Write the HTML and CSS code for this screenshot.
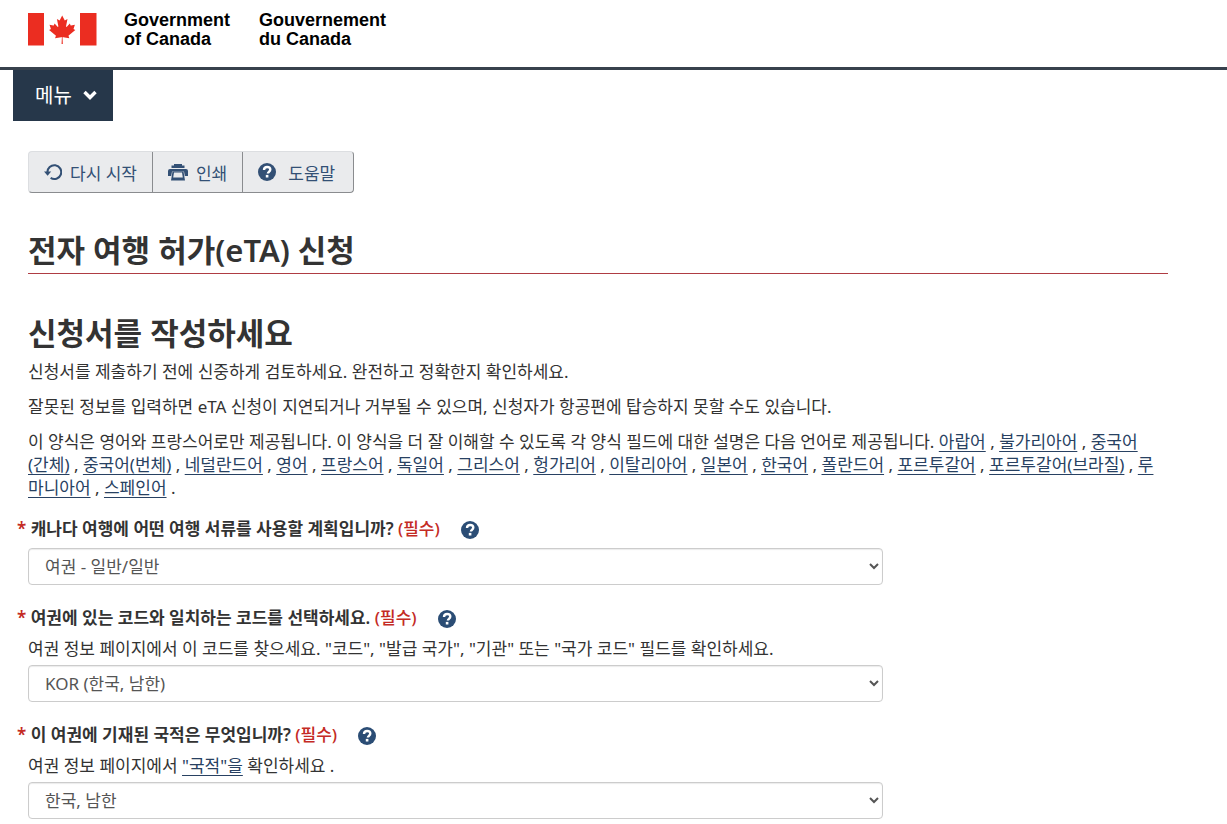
FILE: index.html
```html
<!DOCTYPE html>
<html lang="ko">
<head>
    <meta charset="UTF-8">
    <meta name="viewport" content="width=device-width, initial-scale=1.0">
    <title>전자 여행 허가(eTA) 신청</title>
    <link rel="stylesheet" href="styles.css">
</head>
<body>
    <svg class="sprite" width="0" height="0" aria-hidden="true">
        <symbol id="icon-help" viewBox="0 0 18 18">
            <circle cx="9" cy="9" r="9" fill="currentColor"/>
            <path d="M6 6.900C6 4.900 7.300 4 9.100 4c1.900 0 3.200 1 3.200 2.600 0 2.200-2.400 2.200-2.400 3.900" fill="none" stroke="#fff" stroke-width="2.400"/>
            <rect x="7.800" y="11.900" width="2.600" height="2.600" fill="#fff"/>
        </symbol>
    </svg>

    <header class="header">
        <div class="container brand">
            <svg class="flag" viewBox="0 0 69 33" role="img" aria-label="Canada">
                <path d="M0 0h16v32.500H0zM52 0h16.500v32.500H52z" fill="#eb2d21"/>
                <path transform="translate(34.200 16.600) scale(.00705)" fill="#eb2d21" d="M-90 2030-45 1167a95 95 0 0 0-111-98l-859 151 116-320a65 65 0 0 0-20-73l-941-762 212-99a65 65 0 0 0 34-79l-186-572 542 115a65 65 0 0 0 73-38l105-247 423 454a65 65 0 0 0 111-57l-204-1052 327 189a65 65 0 0 0 91-27l332-652 332 652a65 65 0 0 0 91 27l327-189-204 1052a65 65 0 0 0 111 57l423-454 105 247a65 65 0 0 0 73 38l542-115-186 572a65 65 0 0 0 34 79l212 99-941 762a65 65 0 0 0-20 73l116 320-859-151a95 95 0 0 0-111 98l45 863z"/>
            </svg>
            <div class="brand-names">
                <span lang="en">Government<br>of Canada</span>
                <span lang="fr">Gouvernement<br>du Canada</span>
            </div>
        </div>
    </header>

    <nav class="menu">
        <button type="button" class="menu-button">메뉴
            <svg class="chevron" viewBox="0 0 14 10" aria-hidden="true"><path d="M1.500 2 7 7.500 12.500 2" fill="none" stroke="currentColor" stroke-width="3.400"/></svg>
        </button>
    </nav>

    <main class="container">
        <div class="toolbar">
            <button type="button">
                <svg class="icon" viewBox="0 0 19 18" aria-hidden="true">
                    <path d="M3.600 9.500a7.300 7.300 0 1 1 3.400 5.800" fill="none" stroke="currentColor" stroke-width="2.200"/>
                    <path d="M0 8.500h7.600L3.800 13z" fill="currentColor"/>
                </svg>
                다시 시작
            </button>
            <button type="button">
                <svg class="icon icon-print" viewBox="0 0 20 18" aria-hidden="true">
                    <path d="M6 1h8v1.500h2.500V5h-13V2.500H6z" fill="currentColor"/>
                    <path d="M2 6h16q2 0 2 2v5h-3.200l-.8-4.500H4L3.200 13H0V8q0-2 2-2z" fill="currentColor"/>
                    <path d="M4.500 8.500h11l1.500 9H3zM6 9.500l-.8 5h9.600l-.8-5z" fill="currentColor" fill-rule="evenodd"/>
                </svg>
                인쇄
            </button>
            <button type="button" class="toolbar-help">
                <svg class="icon" aria-hidden="true"><use href="#icon-help"/></svg>
                도움말
            </button>
        </div>

        <h1>전자 여행 허가(eTA) 신청</h1>

        <h2>신청서를 작성하세요</h2>
        <p>신청서를 제출하기 전에 신중하게 검토하세요. 완전하고 정확한지 확인하세요.</p>
        <p>잘못된 정보를 입력하면 eTA 신청이 지연되거나 거부될 수 있으며, 신청자가 항공편에 탑승하지 못할 수도 있습니다.</p>
        <p class="languages">이 양식은 영어와 프랑스어로만 제공됩니다. 이 양식을 더 잘 이해할 수 있도록 각 양식 필드에 대한 설명은 다음 언어로 제공됩니다. <a href="#">아랍어</a> , <a href="#">불가리아어</a> , <a href="#">중국어<wbr>(간체)</a> , <a href="#">중국어(번체)</a> , <a href="#">네덜란드어</a> , <a href="#">영어</a> , <a href="#">프랑스어</a> , <a href="#">독일어</a> , <a href="#">그리스어</a> , <a href="#">헝가리어</a> , <a href="#">이탈리아어</a> , <a href="#">일본어</a> , <a href="#">한국어</a> , <a href="#">폴란드어</a> , <a href="#">포르투갈어</a> , <a href="#">포르투갈어(브라질)</a> , <a href="#">루<wbr>마니아어</a> , <a href="#">스페인어</a> .</p>

        <form>
            <div class="field">
                <div class="field-head">
                    <label for="document">캐나다 여행에 어떤 여행 서류를 사용할 계획입니까? <strong>(필수)</strong></label>
                    <button type="button" class="help" aria-label="도움말"><svg class="icon" aria-hidden="true"><use href="#icon-help"/></svg></button>
                </div>
                <select id="document"><option>여권 - 일반/일반</option></select>
            </div>
            <div class="field">
                <div class="field-head">
                    <label for="code">여권에 있는 코드와 일치하는 코드를 선택하세요. <strong>(필수)</strong></label>
                    <button type="button" class="help" aria-label="도움말"><svg class="icon" aria-hidden="true"><use href="#icon-help"/></svg></button>
                </div>
                <div class="hint">여권 정보 페이지에서 이 코드를 찾으세요. "코드", "발급 국가", "기관" 또는 "국가 코드" 필드를 확인하세요.</div>
                <select id="code"><option>KOR (한국, 남한)</option></select>
            </div>
            <div class="field">
                <div class="field-head">
                    <label for="nationality">이 여권에 기재된 국적은 무엇입니까? <strong>(필수)</strong></label>
                    <button type="button" class="help" aria-label="도움말"><svg class="icon" aria-hidden="true"><use href="#icon-help"/></svg></button>
                </div>
                <div class="hint">여권 정보 페이지에서 <a href="#">"국적"을</a> 확인하세요 .</div>
                <select id="nationality"><option>한국, 남한</option></select>
            </div>
        </form>
    </main>
</body>
</html>
```
FILE: styles.css
```css
* {
    margin: 0;
    padding: 0;
    box-sizing: border-box;
}

body {
    font-family: "Noto Sans", "Noto Sans CJK KR", sans-serif;
    font-size: 17px;
    line-height: 23px;
    color: #333;
    background-color: #fff;
}

button,
select {
    font-family: inherit;
    font-size: inherit;
}

.sprite {
    position: absolute;
}

.container {
    max-width: 1170px;
    margin-left: 13px;
    padding: 0 15px;
}

.header {
    padding: 11px 0 18px;
    border-bottom: 3px solid #38414d;
}

.brand {
    display: flex;
    gap: 27px;
}

.flag {
    width: 69px;
    height: 33px;
    margin-top: 2px;
}

.brand-names {
    display: flex;
    gap: 29px;
    font-family: "Liberation Sans", Arial, sans-serif;
    font-size: 18px;
    font-weight: bold;
    line-height: 19px;
    color: #000;
}

.menu {
    margin-left: 13px;
}

.menu-button {
    display: flex;
    align-items: center;
    gap: 11px;
    height: 51px;
    padding: 0 16px 3px 22px;
    border: none;
    background-color: #26374a;
    color: #fff;
    font-size: 20px;
    cursor: pointer;
}

.chevron {
    width: 14px;
    height: 10px;
    margin-top: 2px;
}

.toolbar {
    display: inline-flex;
    margin: 30px 0 38px;
    border: 1px solid #dcdee1;
    border-right-color: #8a8c8f;
    border-bottom-color: #8a8c8f;
    border-radius: 4px;
    background-color: #eaebed;
}

.toolbar button {
    display: flex;
    align-items: center;
    gap: 8px;
    height: 40px;
    padding: 0 15px;
    border: none;
    background: none;
    color: #335075;
    cursor: pointer;
}

.toolbar button + button {
    border-left: 1px solid #8a8c8f;
}

.toolbar .toolbar-help {
    gap: 12px;
    padding-right: 18px;
}

.icon {
    display: block;
    flex: none;
    width: 18px;
    height: 18px;
}

.icon-print {
    width: 20px;
}

h1,
h2 {
    font-size: 31px;
    font-weight: 600;
    line-height: 39px;
}

h1 {
    padding-bottom: 3px;
    border-bottom: 1px solid #af3c43;
}

h2 {
    margin: 40px 0 7px;
}

p {
    margin-bottom: 12px;
}

.languages {
    word-break: keep-all;
}

a {
    color: #284162;
    text-underline-offset: 3px;
}

.field {
    margin-bottom: 15px;
}

.field-head {
    display: flex;
    align-items: flex-start;
    gap: 21px;
    height: 37px;
    padding-top: 6px;
}

label {
    margin-left: -11px;
    font-weight: 600;
}

label::before {
    content: "* ";
    color: #c42a24;
}

label strong {
    color: #c42a24;
    font-weight: 500;
}

.help {
    margin-top: 4px;
    border: none;
    background: none;
    color: #2b4d75;
    cursor: pointer;
}

.hint {
    margin-bottom: 5px;
}

select {
    display: block;
    width: 75%;
    height: 37px;
    padding: 0 12px;
    border: 1px solid #ccc;
    border-radius: 4px;
    background-color: #fff;
    box-shadow: inset 0 1px 1px rgba(0, 0, 0, 0.08);
    color: #555;
}
```
